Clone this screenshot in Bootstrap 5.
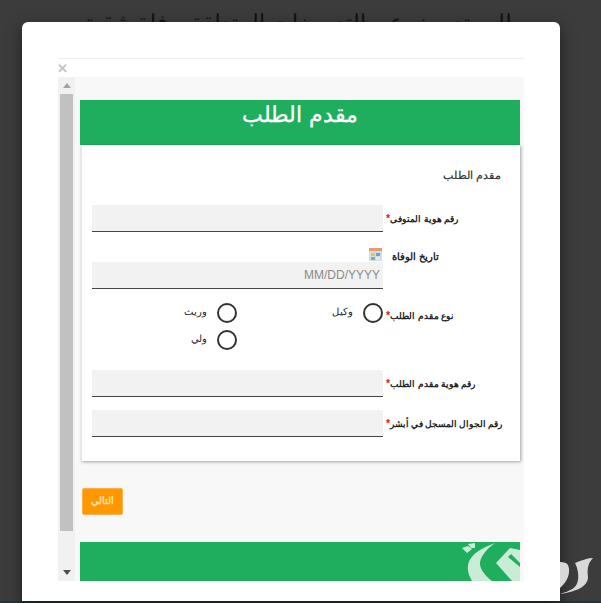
<!DOCTYPE html>
<html lang="ar">
<head>
<meta charset="utf-8">
<link href="https://cdn.jsdelivr.net/npm/bootstrap@5.3.0/dist/css/bootstrap.min.css" rel="stylesheet">
<style>
html,body{margin:0;height:603px;overflow:hidden;background:#3c3c3c;font-family:"Liberation Sans",Arial,sans-serif}
.stage{height:603px;overflow:hidden;position:relative;background:#3c3c3c}
.peek{height:22px;overflow:hidden;color:#111;font-size:22px;line-height:45px;text-align:center;white-space:nowrap}
.dlg{width:538px;height:579px;margin-left:22px;background:#fff;border-radius:6px 6px 0 0;padding:36px 36px 0;box-shadow:0 5px 15px rgba(0,0,0,.5);position:relative}
.stripe{height:2px;background:#22343c}
.rule{height:1px;background:#eee}
.shut{height:18px;color:#c4c4c4;font-size:13px;font-weight:700;line-height:20px;text-align:left;margin-left:-1px}
.frame{height:504px;background:#f8f8f8;display:flex;overflow:hidden}
.sbar{width:17px;flex:none;background:#f1f1f1;display:flex;flex-direction:column;align-items:center;margin-right:5px}
.sbtn{height:17px;flex:none;display:flex;align-items:center;justify-content:center}
.thumb{width:13px;height:437px;background:#c1c1c1;flex:none}
.main{width:440px;flex:none;padding-top:23px}
.hero{height:45px;background:#1fae5e;color:#fff;font-size:22px;line-height:30px;text-align:center;direction:rtl;-webkit-text-stroke:.3px #fff}
.sheet{margin-left:1px;height:316px;background:#fff;box-shadow:1px 1px 3px rgba(0,0,0,.35);border-left:1px solid #e6e6e6;direction:rtl;padding:20px 12px 0 10px;color:#222}
.sheet-title{font-size:11px;color:#333;line-height:20px;height:40px;font-weight:400;padding-right:7px;-webkit-text-stroke:.2px #333}
.line{display:flex;align-items:center;font-size:8.8px;font-weight:700;line-height:14px;color:#222}
.tag{flex:1;min-width:0;text-align:left;margin-left:3px;white-space:nowrap;margin-top:-1px}
.tag-top{align-self:flex-start;margin-top:5px}
.tag-low{align-self:flex-start;margin-top:3px;margin-left:9px;font-size:9.5px}
.tag-tight{word-spacing:-.5px}
.need{color:#c9202c;font-size:10.5px}
.fld{width:291px;height:27px;flex:none;background:#f2f2f2;border:0;border-bottom:1px solid #444;border-radius:0;font-size:12px;direction:ltr;text-align:right;padding:0 3px;color:#888}
.fld::placeholder{color:#8a8a8a;opacity:1}
.gap-a{margin-bottom:15px}
.gap-b{margin-bottom:14px}
.gap-c{margin-bottom:20px}
.gap-d{margin-bottom:13px}
.date-top{height:15px}
.calrow{width:291px;flex:none;height:15px;padding-right:1px}
.cal{width:13px;height:13px;display:block;margin-top:1px}
.choices{width:291px;flex:none;display:grid;grid-template-columns:146px 145px;row-gap:7px;font-weight:400;font-size:10px}
.choice{display:flex;align-items:center;gap:10px}
.choice-text{margin-top:-2px}
.rad{width:20px;height:20px;flex:none;border:2px solid #333;border-radius:50%;background:#fff}
.next{display:block;margin:27px 0 0 2px;width:41px;height:27px;padding:0 0 3px;background:#ff9800;border:1px solid #fbb04c;border-radius:2px;color:#ffe3a8;font-size:10px;font-weight:700;line-height:21px}
.foot{margin-top:27px;height:39px;background:#1fae5e;overflow:hidden;display:flex;justify-content:flex-end}
.wm{position:absolute;left:560px;top:555px;width:41px;height:45px}
</style>
</head>
<body>
<div class="stage">
  <div class="peek" dir="rtl">طلب تعويض عن التعويضات المتعلقة بوفاة شقيق</div>
  <div class="dlg">
    <div class="rule"></div>
    <div class="shut">✕</div>
    <div class="frame">
      <div class="sbar">
        <div class="sbtn"><svg width="8" height="5" viewBox="0 0 8 5"><path d="M0 5 4 0 8 5z" fill="#a3a3a3"/></svg></div>
        <div class="thumb"></div>
        <div class="flex-grow-1"></div>
        <div class="sbtn"><svg width="8" height="5" viewBox="0 0 8 5"><path d="M0 0 8 0 4 5z" fill="#505050"/></svg></div>
      </div>
      <div class="main">
        <div class="hero">مقدم الطلب</div>
        <div class="sheet">
          <div class="sheet-title">مقدم الطلب</div>
          <div class="line gap-a"><div class="tag">رقم هوية المتوفى<span class="need">*</span></div><input class="form-control fld" type="text"></div>
          <div class="line date-top"><div class="tag tag-low">تاريخ الوفاة</div>
            <div class="calrow"><svg class="cal" viewBox="0 0 13 13"><rect width="13" height="13" fill="#cfe0ea"/><rect width="13" height="3" fill="#e79a6a"/><rect x="2" y="5" width="4" height="3" fill="#e7c26a"/><rect x="7" y="5" width="4" height="3" fill="#6aa0c9"/><rect x="2" y="9" width="4" height="3" fill="#7fb77f"/><rect x="7" y="9" width="4" height="3" fill="#e7e7e7"/></svg></div></div>
          <div class="line gap-b"><div class="tag"></div><input class="form-control fld" type="text" placeholder="MM/DD/YYYY"></div>
          <div class="line gap-c"><div class="tag tag-top">نوع مقدم الطلب<span class="need">*</span></div>
            <div class="choices">
              <div class="choice"><span class="rad"></span><span class="choice-text">وكيل</span></div>
              <div class="choice"><span class="rad"></span><span class="choice-text">وريث</span></div>
              <div></div>
              <div class="choice"><span class="rad"></span><span class="choice-text">ولي</span></div>
            </div></div>
          <div class="line gap-d"><div class="tag">رقم هوية مقدم الطلب<span class="need">*</span></div><input class="form-control fld" type="text"></div>
          <div class="line"><div class="tag tag-tight">رقم الجوال المسجل في أبشر<span class="need">*</span></div><input class="form-control fld" type="text"></div>
        </div>
        <button type="button" class="btn next">التالي</button>
        <div class="foot">
          <svg width="60" height="39" viewBox="0 0 60 39"><g fill="#c9ecd7"><path d="M2 6 8 4 12 7 7 11z"/><path d="M8 2 15 1 15 6 11 6z"/><path d="M35 1C22 6 10 12 8 23 7 30 10 35 12 39H32C24 33 19 25 20 20 22 12 28 6 35 1z"/><path d="M36 21 50 6 60 8V39H52z"/></g><path d="M48 15 60 25V21L51 12z" fill="#1fae5e"/></svg>
        </div>
      </div>
    </div>
  </div>
  <div class="stripe"></div>
  <svg class="wm" viewBox="0 0 41 45"><g fill="#d8d8d8"><path d="M0 39C10 36 17 33 18 25 19 18 17 12 15 8 22 5 28 3 33 3 28 8 27 14 28 22 28 30 20 36 0 39z"/><path d="M0 7C4 7 7 8 8 10 11 17 8 26 0 33z"/></g></svg>
</div>
<script src="https://cdn.jsdelivr.net/npm/bootstrap@5.3.0/dist/js/bootstrap.bundle.min.js"></script>
</body>
</html>
